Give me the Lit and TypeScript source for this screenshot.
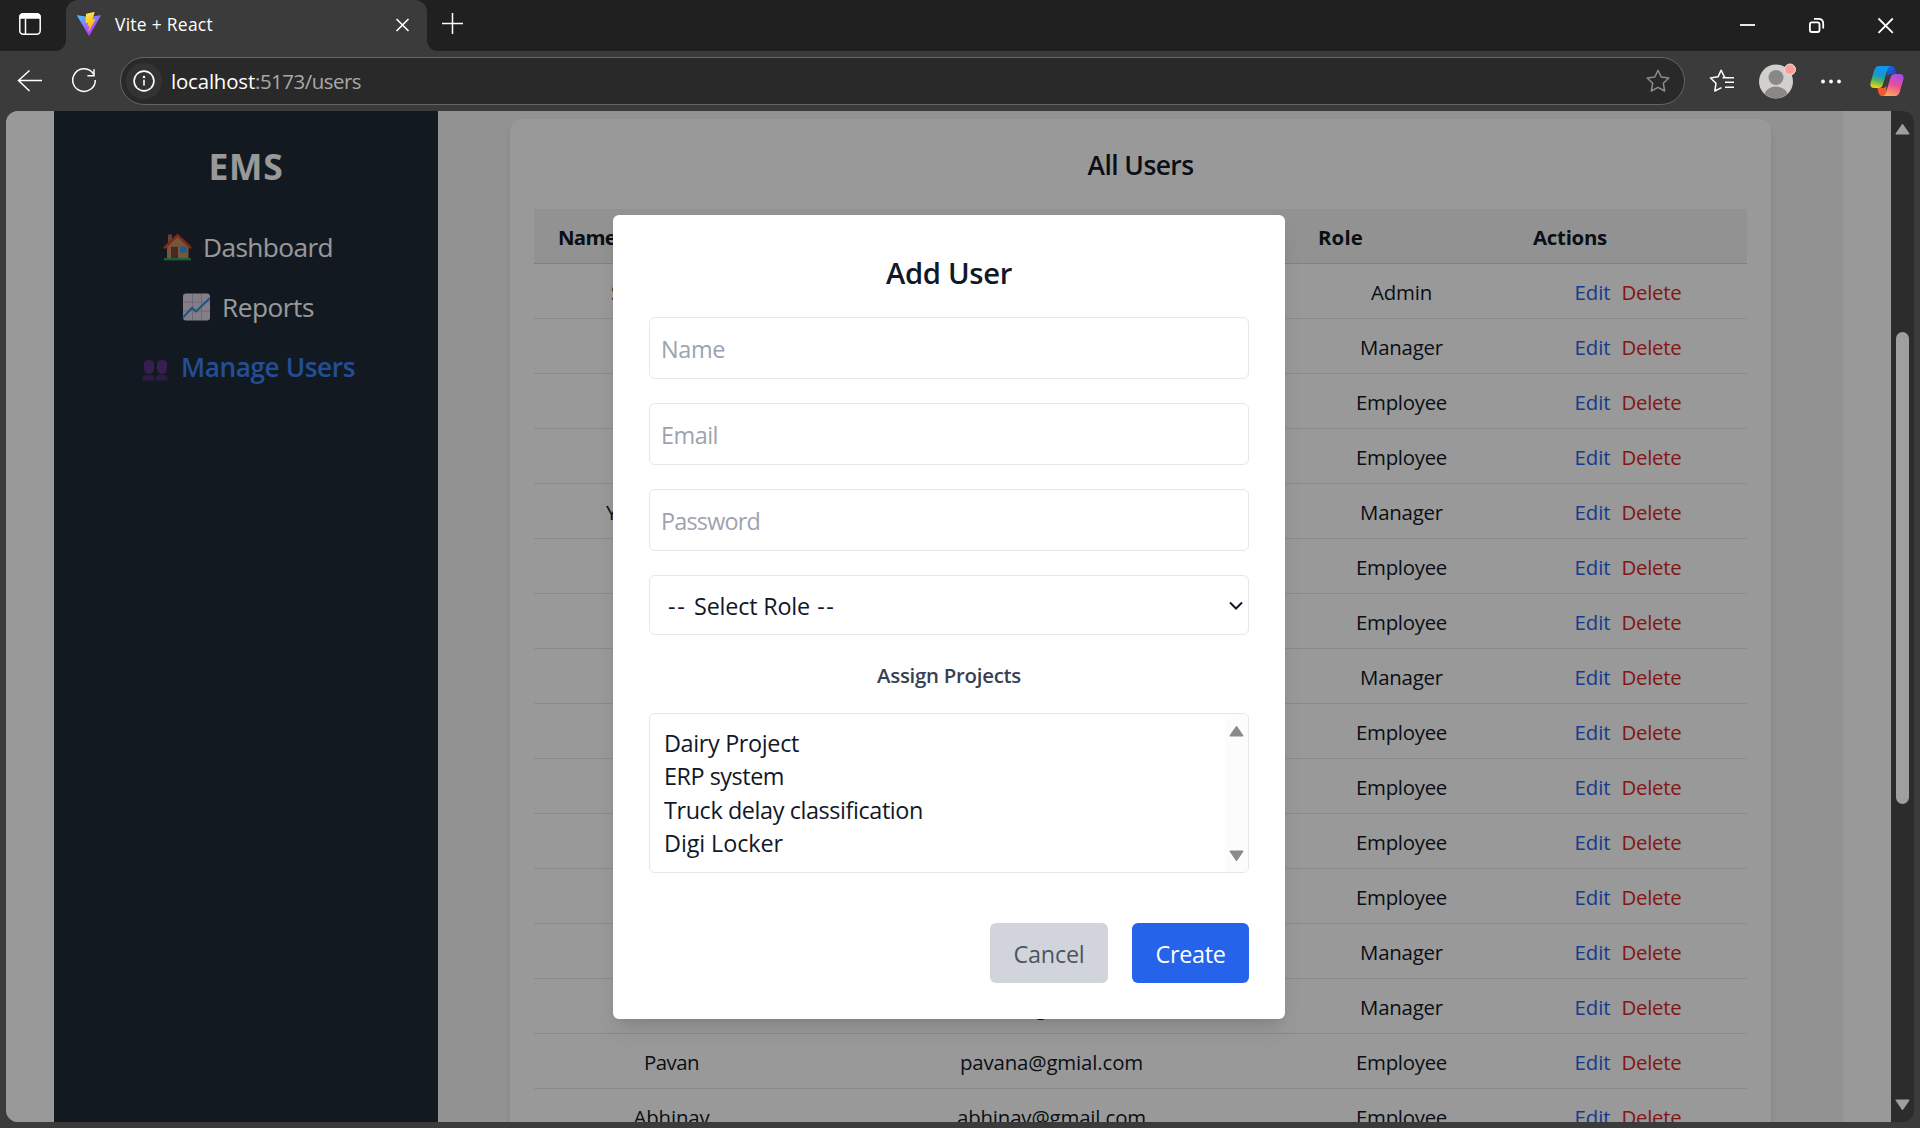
import { LitElement, html, svg, css } from "lit";
import { customElement } from "lit/decorators.js";

interface Row {
  name?: [string, number];
  email?: [string, number];
  role: string;
}

const ROLE_WIDTH: Record<string, number> = { Admin: 61, Manager: 83, Employee: 91 };

const ROWS: Row[] = [
  { name: ["Super Admin", 121], role: "Admin" },
  { role: "Manager" },
  { role: "Employee" },
  { role: "Employee" },
  { name: ["Yashwardhan", 131], role: "Manager" },
  { role: "Employee" },
  { role: "Employee" },
  { role: "Manager" },
  { role: "Employee" },
  { role: "Employee" },
  { role: "Employee" },
  { role: "Employee" },
  { role: "Manager" },
  { email: ["ankit@gmail.com", 160], role: "Manager" },
  { name: ["Pavan", 55], email: ["pavana@gmial.com", 183], role: "Employee" },
  { name: ["Abhinav", 76], email: ["abhinav@gmail.com", 189], role: "Employee" },
];

/** Text tracked so that its advance equals the given width. */
const fit = (text: string, width: number) => html`<span class="fit" data-w=${width}>${text}</span>`;

const star = svg`<path d="M12 1.2 L15.2 8 L22.8 9 L17.3 14.3 L18.7 22 L12 18.3 L5.3 22 L6.7 14.3 L1.2 9 L8.8 8 Z" stroke-linejoin="round"/>`;

@customElement("app-root")
export class AppRoot extends LitElement {
  static styles = css`
    :host { display: block; }
    * { box-sizing: border-box; }
    .window { width: 1920px; height: 1128px; overflow: hidden; display: flex; flex-direction: column; background: #3b3b3b; color: #111827; font-family: "Open Sans", "Noto Sans", sans-serif; }
    .fit { white-space: pre; display: inline-block; }
    svg { display: block; flex: none; }

    .tabs { height: 51px; background: #202020; display: flex; flex: none; color: #fff; }
    .menu { width: 66px; padding: 13px 0 0 19px; }
    .tab { width: 361px; height: 51px; background: #3b3b3b; border-radius: 12px 12px 0 0; display: flex; align-items: center; padding: 0 17px 3px 11px; position: relative; font-size: 17.4px; }
    .tab::before, .tab::after { content: ""; position: absolute; bottom: 0; width: 10px; height: 10px; }
    .tab::before { left: -10px; background: radial-gradient(circle at 0 0, #202020 9.5px, #3b3b3b 10px); }
    .tab::after { right: -10px; background: radial-gradient(circle at 100% 0, #202020 9.5px, #3b3b3b 10px); }
    .title { flex: 1; padding-left: 14px; }
    .plus { padding: 12px 0 0 14px; flex: 1; }
    .controls { display: flex; }

    .toolbar { height: 60px; flex: none; display: flex; align-items: center; padding: 0 16px 0 17px; }
    .reload { margin-left: 29px; }
    .address { margin-left: 23px; width: 1566px; height: 48px; border: 1.5px solid #646464; border-radius: 24px; background: #292929; display: flex; align-items: center; padding: 0 14px 0 5px; font-size: 20.4px; color: #a9a9a9; }
    .info { width: 36px; height: 36px; border-radius: 50%; background: #333; display: flex; align-items: center; justify-content: center; }
    .url { flex: 1; padding-left: 9px; display: flex; }
    .host { color: #fff; }
    .fav { margin-left: 24px; }
    .avatar { margin-left: 24px; margin-bottom: 1px; }
    .dots { margin-left: 25px; }
    .copilot { margin-left: 29px; }

    .frame { flex: none; width: 1908px; height: 1011px; margin-left: 6px; border-radius: 12px; overflow: hidden; display: flex; background: #2c2c2c; }
    .page { width: 1885px; height: 1011px; background: #fff; padding: 0 48px; display: flex; position: relative; overflow: hidden; }
    .sidebar { width: 384px; background: #1f2b37; color: #fff; display: flex; flex-direction: column; align-items: center; padding-top: 28px; }
    .brand { font-size: 35.4px; font-weight: 700; line-height: 54px; }
    .link { display: flex; align-items: center; gap: 11px; height: 60px; font-size: 26.2px; line-height: 60px; }
    .links { padding: 24px 0 0 4px; display: flex; flex-direction: column; align-items: center; }
    .active { color: #3b82f6; font-weight: 600; }
    .main { flex: 1; background: #f3f4f6; padding: 8px 72px 0; }
    .card { height: 1100px; background: #fff; border-radius: 12px; padding: 24px 24px 0; box-shadow: 0 6px 9px -1.5px rgba(0,0,0,.1), 0 3px 6px -3px rgba(0,0,0,.1); }
    .heading { font-size: 26.4px; font-weight: 600; text-align: center; line-height: 44px; height: 66px; }
    .row { display: grid; grid-template-columns: 275px 485px 215px 238px; height: 55px; border-bottom: 1px solid #e5e7eb; font-size: 20.4px; line-height: 57px; text-align: center; }
    .head { background: #f3f4f6; border-color: #d1d5db; font-weight: 700; text-align: left; }
    .head .cell { padding-left: 24px; }
    .cell { height: 54px; white-space: nowrap; }
    .actions { display: flex; justify-content: center; gap: 11px; }
    .edit { color: #2563eb; }
    .delete { color: #dc2626; }

    .overlay { position: absolute; inset: 0; background: rgba(0,0,0,.4); }
    .modal { position: absolute; left: 607px; top: 104px; width: 672px; height: 804px; background: #fff; border-radius: 6px; padding: 36px; display: flex; flex-direction: column; box-shadow: 0 15px 22.5px -4.5px rgba(0,0,0,.1), 0 6px 9px -6px rgba(0,0,0,.1); font-size: 23.4px; }
    .modal-title { font-size: 29.2px; font-weight: 600; line-height: 44px; height: 66px; text-align: center; }
    .field { height: 62px; flex: none; margin-bottom: 24px; border: 1px solid #e5e7eb; border-radius: 6px; padding: 0 11px; line-height: 62px; color: #9ca3af; }
    .select { height: 60px; line-height: 60px; padding: 1px 5px 0 18px; color: #111827; display: flex; justify-content: space-between; align-items: center; margin-bottom: 21px; }
    .label { font-size: 20.4px; font-weight: 600; color: #374151; line-height: 38px; height: 57px; text-align: center; }
    .list { height: 160px; flex: none; border: 1px solid #e5e7eb; border-radius: 6px; display: flex; justify-content: space-between; overflow: hidden; }
    .options { padding: 13px 0 0 14px; line-height: 33.4px; display: flex; flex-direction: column; align-items: flex-start; }
    .listbar { width: 23px; background: #fcfcfc; display: flex; flex-direction: column; justify-content: space-between; align-items: center; padding: 12px 0 11px; }
    .buttons { display: flex; justify-content: flex-end; gap: 24px; padding-top: 50px; line-height: 62px; }
    .btn { height: 60px; border-radius: 6px; text-align: center; }
    .cancel { width: 118px; background: #d1d5db; color: #4b5563; }
    .create { width: 117px; background: #2563eb; color: #fff; font-weight: 500; }

    .scroll { width: 23px; display: flex; flex-direction: column; align-items: center; padding: 13px 0 12px 0; }
    .thumb { width: 13px; height: 472px; border-radius: 7px; background: #9f9f9f; margin-top: 197px; margin-bottom: auto; }
  `;

  firstUpdated() {
    this.renderRoot.querySelectorAll<HTMLElement>(".fit").forEach((el) => {
      const natural = el.getBoundingClientRect().width;
      const count = (el.textContent ?? "").length;
      el.style.letterSpacing = `${(Number(el.dataset.w) - natural) / count}px`;
    });
  }

  private arrow(up: boolean, color: string) {
    return html`<svg width="15" height="11" viewBox="0 0 15 11"><path transform=${up ? "" : "rotate(180 7.5 5.5)"} d="M7.5 1 L13.5 9.7 H1.5 Z" fill=${color} stroke=${color} stroke-width="1.8" stroke-linejoin="round"/></svg>`;
  }

  private renderTabs() {
    return html`<div class="tabs">
      <div class="menu"><svg width="22" height="22" viewBox="0 0 22 22" fill="none" stroke="#fff" stroke-width="1.5"><rect x=".8" y=".8" width="20.4" height="20.4" rx="3.5"/><path d="M1 4 Q1 1 4 1 H18 Q21 1 21 4 V5 H1 Z" fill="#fff"/><path d="M6.5 6 V21"/></svg></div>
      <div class="tab">
        <svg width="24" height="24" viewBox="0 0 24 24">
          <defs>
            <linearGradient id="va" x1="0" y1="0" x2=".7" y2=".9"><stop offset="0" stop-color="#41d1ff"/><stop offset=".5" stop-color="#8a74ff"/><stop offset="1" stop-color="#bd34fe"/></linearGradient>
            <linearGradient id="vb" x1=".4" y1="0" x2=".6" y2="1"><stop offset="0" stop-color="#ffea83"/><stop offset=".15" stop-color="#ffdd35"/><stop offset="1" stop-color="#ffa800"/></linearGradient>
          </defs>
          <path d="M.4 3.2 L12 5 L23.5 3.2 Q24 3.2 23.7 3.8 L12.5 23.5 Q12.1 24 11.7 23.5 L.1 3.8 Q0 3.2 .4 3.2Z" fill="url(#va)"/>
          <path d="M17.2 .1 L9.4 1.7 Q9 1.8 9 2.2 L8.4 10.8 Q8.4 11.3 8.9 11.2 L11.1 10.7 L10.5 13.9 Q10.5 14.4 11 14.3 L12.4 13.9 L11.4 19.2 Q11.6 20 12.1 19.3 L18.3 7.4 Q18.4 6.8 17.8 6.9 L15.5 7.3 L17.6 .6 Q17.7 0 17.2 .1Z" fill="url(#vb)"/>
        </svg>
        <div class="title">${fit("Vite + React", 98)}</div>
        <svg width="15" height="15" viewBox="0 0 15 15" fill="none" stroke="#fff" stroke-width="1.6"><path d="M1.5 2 L13.5 14 M13.5 2 L1.5 14"/></svg>
      </div>
      <div class="plus"><svg width="23" height="23" viewBox="0 0 23 23" stroke="#fff" stroke-width="1.5"><path d="M11.5 1 V22 M1 11.5 H22"/></svg></div>
      <div class="controls">
        <svg width="195" height="51" viewBox="0 0 195 51" fill="none" stroke="#fff" stroke-width="1.8"><path d="M15 25 H30"/><rect x="84.9" y="22.4" width="9.6" height="9.6" rx="2"/><path d="M89 18.9 H93.5 Q98.2 18.9 98.2 23.6 V28.5"/><path d="M153.5 18.5 L167.8 32.8 M167.8 18.5 L153.5 32.8"/></svg>
      </div>
    </div>`;
  }

  private renderToolbar() {
    return html`<div class="toolbar">
      <svg width="26" height="24" viewBox="0 0 26 24" fill="none" stroke="#fff" stroke-width="1.5"><path d="M25 11.5 H1.5 M12.5 1.5 L1.5 11.5 L12.5 22"/></svg>
      <svg class="reload" width="25" height="26" viewBox="0 0 25 26" fill="none" stroke="#fff" stroke-width="1.5"><path d="M21.5 6 A11.3 11.3 0 1 0 23.3 12"/><path d="M22 1.2 V7.8 H15.4"/></svg>
      <div class="address">
        <div class="info"><svg width="22" height="22" viewBox="0 0 22 22" fill="none" stroke="#fff" stroke-width="1.6"><circle cx="11" cy="11" r="9.9"/><path d="M11 9.8 V15.5"/><circle cx="11" cy="7" r=".5"/></svg></div>
        <div class="url"><span class="host">${fit("localhost", 84)}</span>${fit(":5173/users", 106)}</div>
        <svg width="24" height="24" viewBox="0 0 24 24" fill="none" stroke="#8c8c8c" stroke-width="1.5">${star}</svg>
      </div>
      <svg class="fav" width="26" height="24" viewBox="0 0 26 24" fill="none" stroke="#fff" stroke-width="1.5"><path d="M23.5 8.8 H17 L15.3 7.8 L12.2 1.2 L9 7.8 L1.5 9 L7 14.3 L5.8 22 L12.5 18.7 M13.5 8.8 H25 M16 13.2 H25 M16 18.2 H25" stroke-linejoin="round"/></svg>
      <svg class="avatar" width="37" height="36" viewBox="0 0 37 36">
        <defs><clipPath id="av"><circle cx="17" cy="19" r="16.3"/></clipPath></defs>
        <circle cx="17" cy="18.5" r="17" fill="#d2d0ce"/><circle cx="17" cy="14.5" r="7.5" fill="#8a8886"/><ellipse cx="17" cy="34" rx="12" ry="10.5" fill="#8a8886" clip-path="url(#av)"/>
        <circle cx="31" cy="6.5" r="5.5" fill="#ff9f9a" stroke="#f3e1df" stroke-width="1"/>
      </svg>
      <svg class="dots" width="20" height="6" viewBox="0 0 20 6" fill="#fff"><circle cx="2" cy="3.5" r="1.9"/><circle cx="10" cy="3.5" r="1.9"/><circle cx="18" cy="3.5" r="1.9"/></svg>
      <svg class="copilot" width="34" height="32" viewBox="0 0 34 32">
        <defs>
          <linearGradient id="ca" x1=".5" y1="0" x2=".3" y2="1"><stop offset="0" stop-color="#1595ef"/><stop offset=".4" stop-color="#1497d4"/><stop offset=".65" stop-color="#4caf68"/><stop offset="1" stop-color="#f5d90a"/></linearGradient>
          <linearGradient id="cb" x1=".7" y1="0" x2=".4" y2="1"><stop offset="0" stop-color="#a34bf0"/><stop offset=".5" stop-color="#ea4f97"/><stop offset="1" stop-color="#ffa45c"/></linearGradient>
          <linearGradient id="cc" x1="0" y1="0" x2="1" y2="1"><stop offset="0" stop-color="#1b6ae0"/><stop offset="1" stop-color="#1a3fc0"/></linearGradient>
        </defs>
        <path d="M17 1 H21 Q24 1 25 4 L26.5 9 H21 Q18.5 9 17.5 12 Z" fill="url(#cc)"/>
        <path d="M16 31 H12 Q9.5 31 8.5 27.5 L7.3 23 H13 Q15.5 23 16.5 20 Z" fill="#f4582e"/>
        <path d="M9 1 H21 Q18.5 1 17.5 4.5 L12.7 20 Q11.8 23 9 23 H4.5 Q-.8 23 .8 17 L4.3 5 Q5.5 1 9 1Z" fill="url(#ca)"/>
        <path d="M25 31 H12.5 Q15 31 16 27.5 L20.7 12 Q21.6 9 24.5 9 H29.5 Q34.7 9 33.2 15 L29.7 27 Q28.5 31 25 31Z" fill="url(#cb)"/>
      </svg>
    </div>`;
  }

  private renderSidebar() {
    return html`<div class="sidebar">
      <div class="brand">${fit("EMS", 75)}</div>
      <div class="links">
        <div class="link">
          <svg width="29" height="28" viewBox="0 0 29 28"><path d="M5 1.5 H9 V9 H5Z" fill="#a8704a"/><path d="M4 13 L14.5 3 L25.5 13 V26 H4Z" fill="#c98f62"/><path d="M1.8 14.5 L14.5 2.2 L27.3 14.5" fill="none" stroke="#d5442f" stroke-width="2.6" stroke-linecap="round"/><path d="M8 13.8 H15 V26 H8Z" fill="#6f4640"/><rect x="17" y="13.5" width="6.5" height="6" fill="#2a9fe0"/><path d="M1 25 H28 V27.3 H1Z" fill="#2f9e5a"/></svg>
          ${fit("Dashboard", 130)}
        </div>
        <div class="link">
          <svg width="29" height="28" viewBox="0 0 29 28"><rect x="1" y=".5" width="27" height="27" rx="3" fill="#dcd3e3"/><path d="M10.5 1 V27 M19.5 1 V27 M1 9 H28 M1 18 H28" stroke="#b8aec2" stroke-width="1"/><path d="M1 24.5 L10 15 L14 18.5 L28 5" fill="none" stroke="#2f8fcf" stroke-width="2"/></svg>
          ${fit("Reports", 92)}
        </div>
        <div class="link active">
          <svg width="29" height="28" viewBox="0 0 29 28" fill="#5b3383"><g transform="translate(0 2)"><path d="M3 9 Q3 5 8 5 Q13 5 13 9 V14 Q12 19 8 19 Q4 19 3 14Z M16 9 Q16 5 21 5 Q26 5 26 9 V14 Q25 19 21 19 Q17 19 16 14Z"/><path d="M1 25.5 Q1 20 5 20 H10 Q13.6 20 13.6 25.5Z M14.5 25.5 Q14.5 20 18 20 H23 Q27 20 27 25.5Z" fill="#4f2b75"/></g></svg>
          ${fit("Manage Users", 174)}
        </div>
      </div>
    </div>`;
  }

  private renderRow(r: Row) {
    return html`<div class="row">
      <div class="cell">${r.name ? fit(...r.name) : ""}</div>
      <div class="cell">${r.email ? fit(...r.email) : ""}</div>
      <div class="cell">${fit(r.role, ROLE_WIDTH[r.role])}</div>
      <div class="cell actions"><span class="edit">${fit("Edit", 36)}</span><span class="delete">${fit("Delete", 60)}</span></div>
    </div>`;
  }

  private renderModal() {
    return html`<div class="modal">
      <div class="modal-title">${fit("Add User", 126)}</div>
      <div class="field">${fit("Name", 64)}</div>
      <div class="field">${fit("Email", 57)}</div>
      <div class="field">${fit("Password", 99)}</div>
      <div class="field select"><span>${fit("-- ", 26)}${fit("Select Role", 116)}${fit(" --", 25)}</span><svg width="14" height="10" viewBox="0 0 14 10" fill="none" stroke="#111827" stroke-width="2"><path d="M1 1.5 L7 7.5 L13 1.5"/></svg></div>
      <div class="label">${fit("Assign Projects", 144)}</div>
      <div class="list">
        <div class="options">${fit("Dairy Project", 135)}${fit("ERP system", 120)}${fit("Truck delay classification", 259)}${fit("Digi Locker", 119)}</div>
        <div class="listbar">${this.arrow(true, "#8a8a8a")}${this.arrow(false, "#8a8a8a")}</div>
      </div>
      <div class="buttons"><div class="btn cancel">${fit("Cancel", 71)}</div><div class="btn create">${fit("Create", 70)}</div></div>
    </div>`;
  }

  render() {
    return html`<div class="window">
      ${this.renderTabs()}${this.renderToolbar()}
      <div class="frame">
        <div class="page">
          ${this.renderSidebar()}
          <div class="main"><div class="card">
            <div class="heading">${fit("All Users", 106)}</div>
            <div class="row head"><div class="cell">${fit("Name", 58)}</div><div class="cell"></div><div class="cell">${fit("Role", 45)}</div><div class="cell">${fit("Actions", 74)}</div></div>
            ${ROWS.map((r) => this.renderRow(r))}
          </div></div>
          <div class="overlay"></div>
          ${this.renderModal()}
        </div>
        <div class="scroll">${this.arrow(true, "#9f9f9f")}<div class="thumb"></div>${this.arrow(false, "#9f9f9f")}</div>
      </div>
    </div>`;
  }
}
